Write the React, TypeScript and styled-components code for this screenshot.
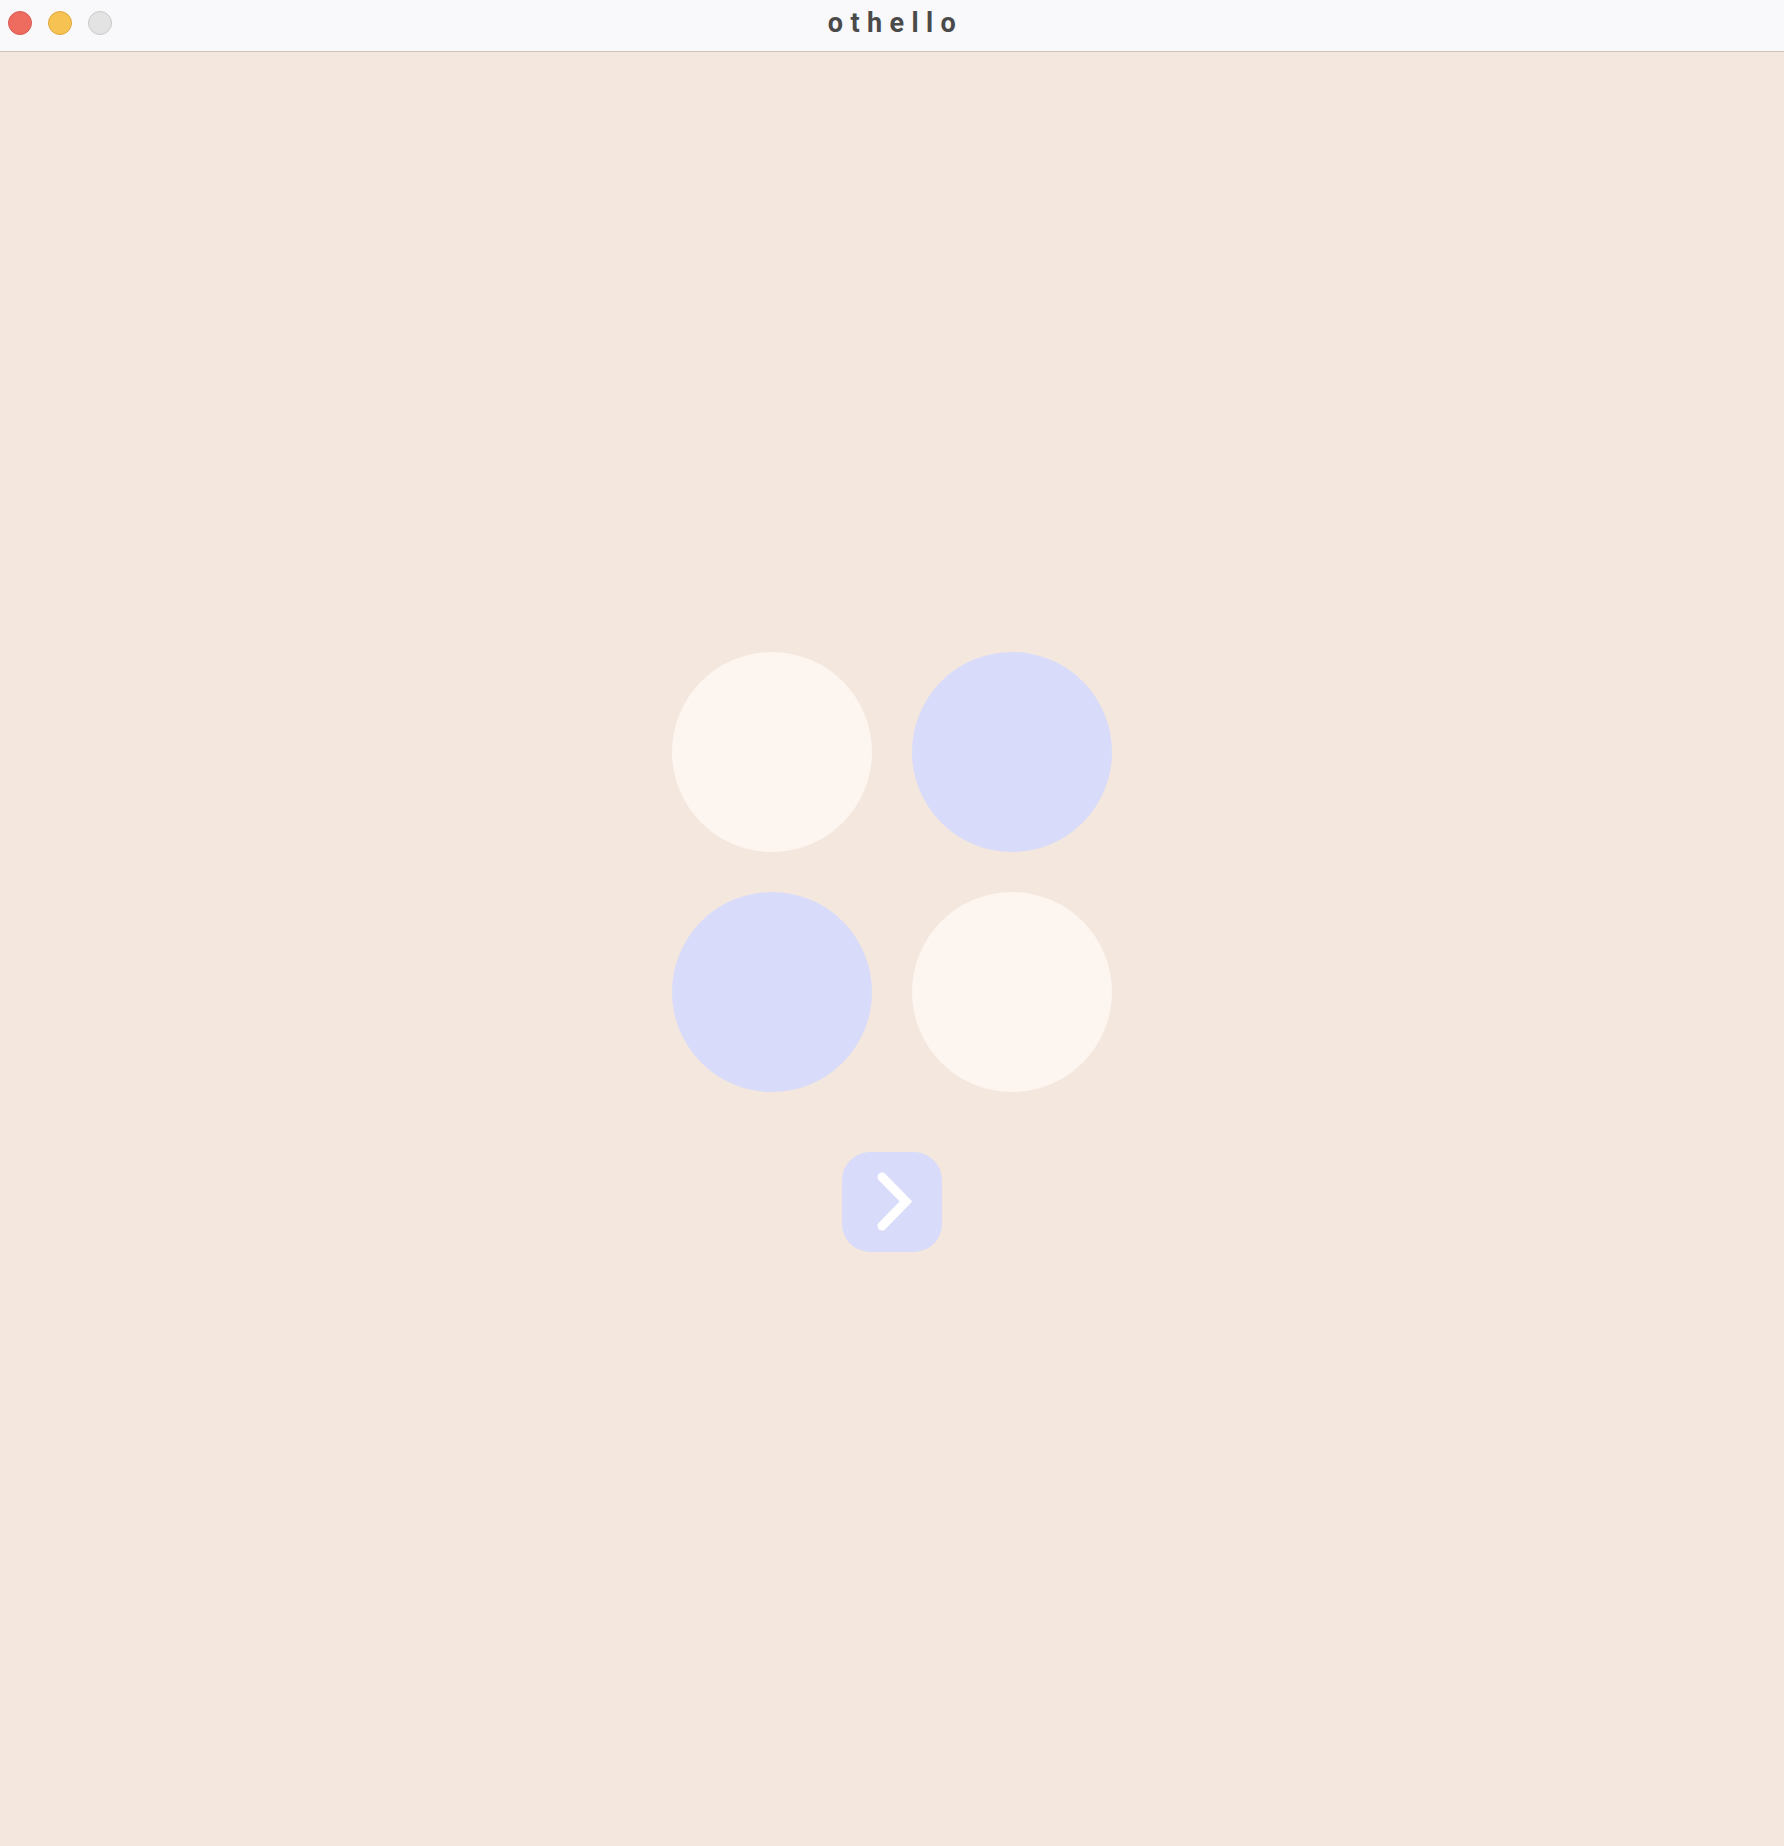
import React from "react";
import styled, { createGlobalStyle } from "styled-components";

const Global = createGlobalStyle`
  html, body { margin: 0; padding: 0; height: 100%; }
  body { background: #f4e7de; font-family: Roboto, "Liberation Sans", sans-serif; }
  #root { min-height: 100vh; display: flex; flex-direction: column; }
`;

const TitleBar = styled.header`
  height: 52px;
  box-sizing: border-box;
  flex: none;
  background: #f9f9fb;
  border-bottom: 1px solid #cfc2b8;
  display: grid;
  grid-template-columns: 1fr auto 1fr;
  align-items: center;
  padding: 0 8px 5px;
`;

const Lights = styled.div`
  display: flex;
  gap: 16px;
  align-items: center;
`;

const Light = styled.span<{ $fill: string; $edge: string }>`
  width: 22px;
  height: 22px;
  border-radius: 50%;
  background: ${(p) => p.$fill};
  border: 1px solid ${(p) => p.$edge};
`;

const Title = styled.h1`
  margin: 0;
  font-family: Roboto, "Liberation Sans", sans-serif;
  font-weight: 700;
  font-size: 27px;
  line-height: 32px;
  letter-spacing: 7.4px;
  color: #4a4a4a;
  padding-left: 7px;
`;

const Main = styled.main`
  flex: 1;
  display: flex;
  flex-direction: column;
  align-items: center;
  justify-content: center;
  gap: 60px;
  padding-top: 5px;
`;

const Board = styled.div`
  display: grid;
  grid-template-columns: repeat(2, 200px);
  grid-template-rows: repeat(2, 200px);
  gap: 40px;
`;

const Disc = styled.div<{ $light: boolean }>`
  width: 200px;
  height: 200px;
  border-radius: 50%;
  background: ${(p) => (p.$light ? "#fdf5f0" : "#d8dbfa")};
`;

const NextButton = styled.button`
  width: 100px;
  height: 100px;
  border: none;
  border-radius: 28px;
  background: #d8dbfa;
  padding: 0;
  display: flex;
  align-items: center;
  justify-content: center;
  cursor: pointer;
`;

export default function App() {
  const discs = [true, false, false, true];
  return (
    <>
      <Global />
      <TitleBar>
        <Lights>
          <Light $fill="#ee6b60" $edge="#d75a50" />
          <Light $fill="#f6c352" $edge="#dfa93f" />
          <Light $fill="#e3e3e3" $edge="#c9c9c9" />
        </Lights>
        <Title>othello</Title>
        <div />
      </TitleBar>
      <Main>
        <Board>
          {discs.map((l, i) => (
            <Disc key={i} $light={l} />
          ))}
        </Board>
        <NextButton aria-label="next">
          <svg width="100" height="100" viewBox="0 0 100 100">
            <path
              d="M40 25 L64 49.5 L40 74"
              fill="none"
              stroke="#ffffff"
              strokeWidth="9"
              strokeLinecap="round"
              strokeLinejoin="miter"
            />
          </svg>
        </NextButton>
      </Main>
    </>
  );
}
